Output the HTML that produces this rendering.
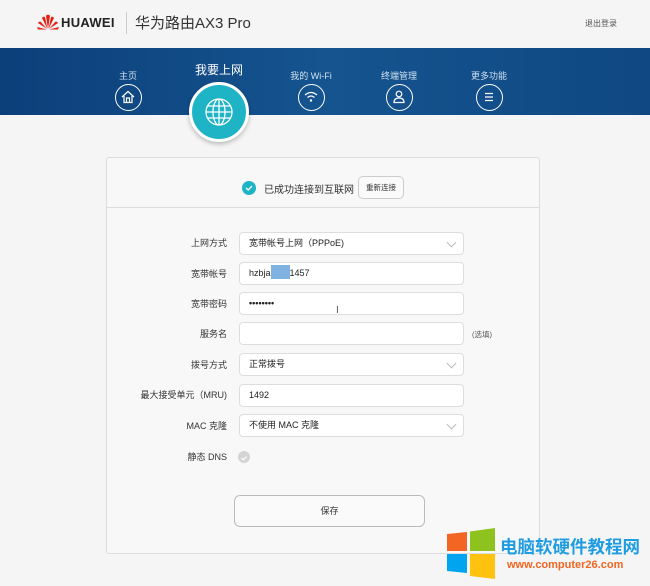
<!DOCTYPE html>
<html><head><meta charset="utf-8"><style>
*{margin:0;padding:0;box-sizing:border-box}
body{width:650px;height:586px;background:#f5f5f5;font-family:"Liberation Sans","Noto Sans CJK SC",sans-serif;position:relative;overflow:hidden;color:#333}
.abs{position:absolute}
.band{left:0;top:48px;width:650px;height:67px;background:linear-gradient(90deg,#0c3f7a,#15548f 50%,#0f4883)}
.nl{color:#cfe0f0;font-size:9px;text-align:center;width:80px}
.ic{width:27px;height:27px;border:1.3px solid #fff;border-radius:50%}
.card{left:106px;top:157px;width:434px;height:397px;background:#f8f8f8;border:1px solid #ddd;border-radius:3px}
.lab{font-size:9px;color:#333;text-align:right;width:140px;left:87px}
.f{left:239px;width:225px;height:23px;background:#fff;border:1px solid #ddd;border-radius:4px;font-size:9px;padding-left:9px;line-height:21px;color:#222}
.chev{position:absolute;right:8px;top:6px;width:7px;height:7px;border-right:1px solid #bbb;border-bottom:1px solid #bbb;transform:rotate(45deg)}
</style></head><body>
<svg class="abs" style="left:37px;top:14px" width="22" height="16" viewBox="0 0 22 16">
<g fill="#e2231a"><path d="M11 15 L9 2 Q10 0 11 1Z"/><path d="M11 15 L13 2 Q12 0 11 1Z"/><path d="M10.5 15 L5 4 Q6 2 8 3Z"/><path d="M11.5 15 L17 4 Q16 2 14 3Z"/><path d="M10 15 L1 9 Q2 7 4 8Z"/><path d="M12 15 L21 9 Q20 7 18 8Z"/><path d="M10 15.5 L0 13 L1 15.5Z"/><path d="M12 15.5 L22 13 L21 15.5Z"/></g></svg>
<div class="abs" style="left:61px;top:15px;font-size:13px;font-weight:bold;color:#222;letter-spacing:.3px">HUAWEI</div>
<div class="abs" style="left:126px;top:12px;width:1px;height:22px;background:#ccc"></div>
<div class="abs" style="left:135px;top:12px;font-size:15px;color:#333">华为路由AX3 Pro</div>
<div class="abs" style="left:585px;top:18px;font-size:8px;color:#555">退出登录</div>
<div class="abs band"></div>
<div class="abs nl" style="left:88px;top:69px">主页</div>
<div class="abs nl" style="left:271px;top:69px">我的 Wi-Fi</div>
<div class="abs nl" style="left:359px;top:69px">终端管理</div>
<div class="abs nl" style="left:449px;top:69px">更多功能</div>
<div class="abs" style="left:179px;top:61px;width:80px;text-align:center;color:#fff;font-size:12px">我要上网</div>
<div class="abs ic" style="left:115px;top:84px"><svg width="24" height="24" viewBox="0 0 24 24"><path d="M6 12 L12 6.5 L18 12 M8 11 V17.5 H16 V11 M10.5 17.5 V13 H13.5 V17.5" fill="none" stroke="#fff" stroke-width="1.2"/></svg></div>
<div class="abs ic" style="left:298px;top:84px"><svg width="24" height="24" viewBox="0 0 24 24"><g fill="none" stroke="#fff" stroke-width="1.2"><path d="M6 10 Q12 5 18 10"/><path d="M8.5 12.5 Q12 9.5 15.5 12.5"/></g><circle cx="12" cy="15.5" r="1.2" fill="#fff"/></svg></div>
<div class="abs ic" style="left:386px;top:84px"><svg width="24" height="24" viewBox="0 0 24 24"><g fill="none" stroke="#fff" stroke-width="1.2"><circle cx="12" cy="9" r="2.8"/><path d="M7 17.5 Q7 13 12 13 Q17 13 17 17.5Z"/></g></svg></div>
<div class="abs ic" style="left:476px;top:84px"><svg width="24" height="24" viewBox="0 0 24 24"><path d="M8 8.5H16M8 12H16M8 15.5H16" stroke="#fff" stroke-width="1.2"/></svg></div>
<div class="abs" style="left:189px;top:82px;width:60px;height:60px;border-radius:50%;background:#1fb3c6;border:3px solid #fff;box-shadow:0 2px 5px rgba(0,0,0,.25)">
<svg width="54" height="54" viewBox="0 0 54 54"><g fill="none" stroke="#fff" stroke-width="1.3"><circle cx="27" cy="27" r="13"/><ellipse cx="27" cy="27" rx="6" ry="13"/><path d="M14 27H40M27 14V40M16 21H38M16 33H38"/></g></svg></div>
<div class="abs card"></div>
<div class="abs" style="left:107px;top:207px;width:432px;height:1px;background:#ddd"></div>
<div class="abs" style="left:242px;top:181px;width:14px;height:14px;border-radius:50%;background:#1fb3c6"><svg width="14" height="14"><path d="M4 7 L6.2 9 L10 5" stroke="#fff" stroke-width="1.3" fill="none"/></svg></div>
<div class="abs" style="left:264px;top:181px;font-size:10px">已成功连接到互联网</div>
<div class="abs" style="left:358px;top:176px;width:46px;height:23px;border:1px solid #ccc;border-radius:5px;background:#fafafa;font-size:7.5px;text-align:center;line-height:21px">重新连接</div>
<div class="abs lab" style="top:236px">上网方式</div><div class="abs f" style="top:232px">宽带帐号上网（PPPoE)<div class="chev"></div></div>
<div class="abs lab" style="top:267px">宽带帐号</div><div class="abs f" style="top:262px">hzbja<span style="display:inline-block;width:19px;height:14px;background:#7fb2e0;vertical-align:-3px"></span>1457</div>
<div class="abs lab" style="top:297px">宽带密码</div><div class="abs f" style="top:292px;font-weight:bold">••••••••</div>
<div class="abs" style="left:336px;top:305px;font-size:10px;color:#555">I</div>
<div class="abs lab" style="top:327px">服务名</div><div class="abs f" style="top:322px"></div><div class="abs" style="left:472px;top:329px;font-size:7.5px;color:#555">(选填)</div>
<div class="abs lab" style="top:358px">拨号方式</div><div class="abs f" style="top:353px">正常拨号<div class="chev"></div></div>
<div class="abs lab" style="top:388px">最大接受单元（MRU)</div><div class="abs f" style="top:384px">1492</div>
<div class="abs lab" style="top:419px">MAC 克隆</div><div class="abs f" style="top:414px">不使用 MAC 克隆<div class="chev"></div></div>
<div class="abs lab" style="top:450px">静态 DNS</div>
<div class="abs" style="left:238px;top:451px;width:12px;height:12px;border-radius:50%;background:#d4d4d4"><svg width="12" height="12"><path d="M3.5 6 L5.3 7.8 L8.5 4.5" stroke="#fff" stroke-width="1.2" fill="none"/></svg></div>
<div class="abs" style="left:234px;top:495px;width:191px;height:32px;border:1px solid #bbb;border-radius:6px;background:#fafafa;font-size:9px;text-align:center;line-height:30px">保存</div>
<svg class="abs" style="left:445px;top:528px" width="52" height="52" viewBox="0 0 52 52"><path d="M2 6 L22 4 V23 H2Z" fill="#f26522"/><path d="M25 3.5 L50 0 V23 H25Z" fill="#8dc21f"/><path d="M2 26 H22 V45 L2 43Z" fill="#00a4ef"/><path d="M25 26 H50 V51 L25 48Z" fill="#ffc20e"/></svg>
<div class="abs" style="left:500px;top:534px;font-size:17.5px;font-weight:bold;color:#1f9de0">电脑软硬件教程网</div>
<div class="abs" style="left:507px;top:559px;font-size:11px;font-weight:bold;color:#f26522">www.computer26.com</div>
</body></html>
